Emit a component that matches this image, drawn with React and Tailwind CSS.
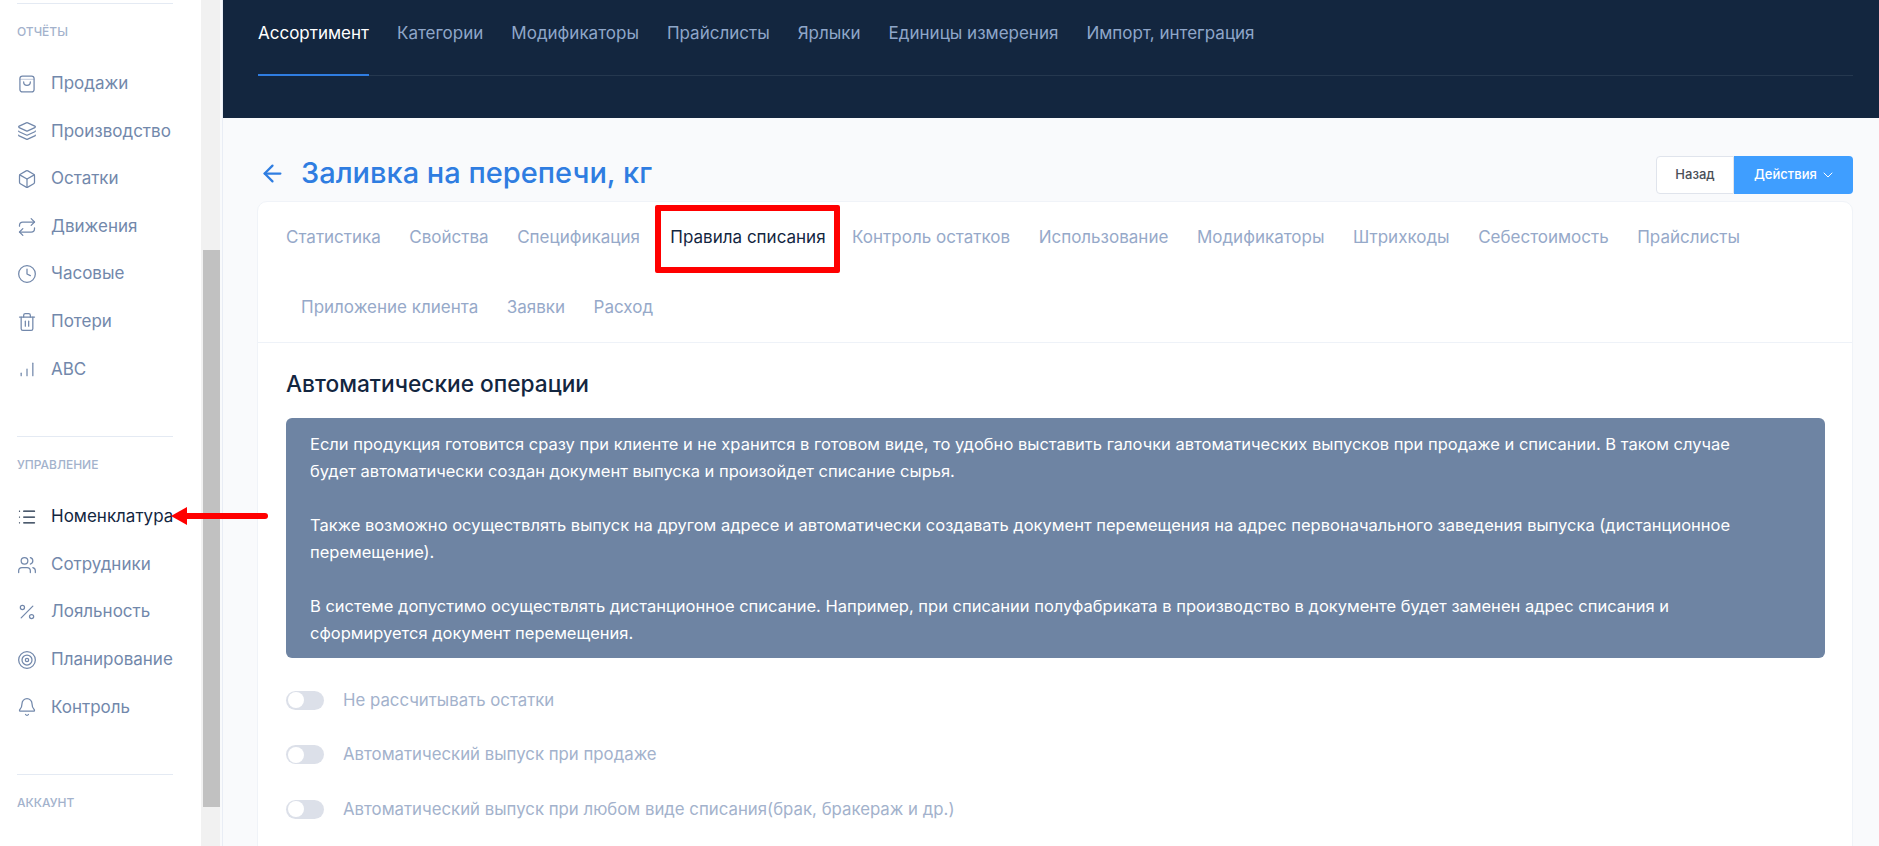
import React from "react";
import {
  Layers,
  Box,
  Repeat,
  Clock,
  Trash2,
  List,
  Users,
  Percent,
  Target,
  Bell,
  User,
  ArrowLeft,
  ChevronDown,
} from "lucide-react";

const BagIcon = (props) => (
  <svg viewBox="0 0 24 24" fill="none" stroke="currentColor" strokeLinecap="round" strokeLinejoin="round" {...props}>
    <rect x="3.5" y="2.5" width="17" height="19" rx="3" />
    <path d="M3.5 6.5h17" opacity="0.35" />
    <path d="M8 9.5a4 4 0 0 0 8 0" />
  </svg>
);

const SignalIcon = (props) => (
  <svg viewBox="0 0 24 24" fill="none" stroke="currentColor" strokeLinecap="round" {...props}>
    <path d="M5 20v-3" />
    <path d="M12 20v-8" />
    <path d="M19 20V5" />
  </svg>
);

const reports = [
  [BagIcon, "Продажи"],
  [Layers, "Производство"],
  [Box, "Остатки"],
  [Repeat, "Движения"],
  [Clock, "Часовые"],
  [Trash2, "Потери"],
  [SignalIcon, "ABC"],
];

const manage = [
  [List, "Номенклатура", true],
  [Users, "Сотрудники"],
  [Percent, "Лояльность"],
  [Target, "Планирование"],
  [Bell, "Контроль"],
];

const topTabs = ["Категории", "Модификаторы", "Прайслисты", "Ярлыки", "Единицы измерения", "Импорт, интеграция"];
const firstRow = ["Контроль остатков", "Использование", "Модификаторы", "Штрихкоды", "Себестоимость", "Прайслисты"];
const secondRow = ["Приложение клиента", "Заявки", "Расход"];
const toggles = [
  "Не рассчитывать остатки",
  "Автоматический выпуск при продаже",
  "Автоматический выпуск при любом виде списания(брак, бракераж и др.)",
];

const NavItem = ({ icon: Icon, label, active }) => (
  <div className={`flex h-[47.6px] items-center gap-[14px] text-[17px] ${active ? "text-[#13263f]" : "text-[#7288ab]"}`}>
    <Icon className="h-5 w-5 shrink-0" strokeWidth={1.5} />
    {label && <span className="whitespace-nowrap">{label}</span>}
  </div>
);

const Section = ({ title, children }) => (
  <div>
    <div className="border-t border-[#e4eaf3]" />
    <div className="mt-[20px] mb-[20px] h-4 text-[12px] leading-4 font-medium text-[#a3b2cc] uppercase">{title}</div>
    {children}
  </div>
);

const Sidebar = () => (
  <div className="w-[201px] shrink-0 bg-white pt-[3px] pl-[17px] pr-[28px]">
    <Section title="Отчёты">
      {reports.map(([icon, label]) => (
        <NavItem key={label} icon={icon} label={label} />
      ))}
    </Section>
    <div className="mt-[43px]">
      <Section title="Управление">
        {manage.map(([icon, label, active]) => (
          <NavItem key={label} icon={icon} label={label} active={active} />
        ))}
      </Section>
    </div>
    <div className="mt-[43px]">
      <Section title="Аккаунт">
        <NavItem icon={User} />
      </Section>
    </div>
  </div>
);

const Toggle = ({ label }) => (
  <div className="flex h-[54.5px] items-center gap-[19px]">
    <div className="flex h-[19px] w-[38px] items-center rounded-full bg-[#dce0e9] pl-[2px]">
      <div className="h-[16px] w-[16px] rounded-full bg-white" />
    </div>
    <span className="text-[16.8px] text-[#a3b2cc]">{label}</span>
  </div>
);

const App = () => (
  <div className="relative flex h-[846px] overflow-hidden bg-[#f9fafc] font-['Inter',sans-serif]">
    <Sidebar />
    <div className="w-[19px] shrink-0 bg-[#f1f1f1] pl-[2px]">
      <div className="mt-[250px] h-[557px] bg-[#c1c1c1]" />
    </div>
    <div className="w-[3px] shrink-0 border-r border-[#e9edf5] bg-[#f9fafc]" />

    <div className="min-w-0 flex-1">
      <div className="h-[118px] bg-[#13263f] pl-[35px] pr-[26px]">
        <div className="flex h-[76px] gap-[28px] border-b border-[#25384f] text-[17px]">
          <div className="h-[76px] border-b-2 border-[#2f7de1] pt-[21px] leading-[24px] text-white">Ассортимент</div>
          {topTabs.map((t) => (
            <div key={t} className="pt-[21px] leading-[24px] text-[#8fa6c9]">{t}</div>
          ))}
        </div>
      </div>

      <div className="pl-[34px] pr-[26px]">
        <div className="flex h-[83px] items-end justify-between pb-[7px]">
          <div className="mb-[1px] flex items-center gap-[15px] text-[#2f7de1]">
            <ArrowLeft className="ml-[2px] h-[27px] w-[27px]" strokeWidth={2} />
            <h1 className="text-[29px] leading-[40px] font-medium">Заливка на перепечи, кг</h1>
          </div>
          <div className="flex h-[38px] text-[13px] font-medium">
            <div className="flex w-[78px] items-center justify-center rounded-l-[4px] border border-[#e0e4ec] bg-white text-[#4a4f57]">Назад</div>
            <div className="flex w-[119px] items-center gap-[3px] rounded-r-[4px] bg-[#3f9eff] pl-[20px] text-white">
              Действия
              <ChevronDown className="h-4 w-4" strokeWidth={1.5} />
            </div>
          </div>
        </div>

        <div className="h-[700px] rounded-t-[10px] border border-[#f0f3f8] bg-white">
          <div className="border-b border-[#eef2f8] pt-[21px] pb-[19px]">
            <div className="flex h-[30px] items-center gap-[28.5px] pl-[28px] text-[17px] text-[#96a9c9]">
              <span>Статистика</span>
              <span>Свойства</span>
              <span>Спецификация</span>
              <span className="relative mr-[-2px] ml-[2px] text-[#13263f]">
                Правила списания
                <span className="absolute -top-[20px] -right-[14px] -bottom-[22px] -left-[15px] rounded-[2px] border-[6px] border-[#ff0000]" />
              </span>
              {firstRow.map((t) => (
                <span key={t}>{t}</span>
              ))}
            </div>
            <div className="mt-[40px] flex h-[30px] items-center gap-[28.5px] pl-[43px] text-[17px] text-[#96a9c9]">
              {secondRow.map((t) => (
                <span key={t}>{t}</span>
              ))}
            </div>
          </div>

          <div className="pl-[28px] pr-[27px]">
            <h2 className="mt-[25px] text-[22.7px] leading-[32px] font-medium text-[#13263f]">Автоматические операции</h2>
            <div className="mt-[18px] rounded-[6px] bg-[#6e84a3] pt-[13px] pr-[50px] pb-[11px] pl-6 text-[16.5px] leading-[27px] text-white">
              Если продукция готовится сразу при клиенте и не хранится в готовом виде, то удобно выставить галочки автоматических выпусков при продаже и списании. В таком случае будет автоматически создан документ выпуска и произойдет списание сырья.
              <br />
              <br />
              Также возможно осуществлять выпуск на другом адресе и автоматически создавать документ перемещения на адрес первоначального заведения выпуска (дистанционное перемещение).
              <br />
              <br />
              В системе допустимо осуществлять дистанционное списание. Например, при списании полуфабриката в производство в документе будет заменен адрес списания и сформируется документ перемещения.
            </div>
            <div className="mt-[15px]">
              {toggles.map((t) => (
                <Toggle key={t} label={t} />
              ))}
            </div>
          </div>
        </div>
      </div>
    </div>

    <div className="absolute top-[507px] left-[171px] flex items-center">
      <div className="h-0 w-0 border-y-[9px] border-r-[16px] border-y-transparent border-r-[#ff0000]" />
      <div className="h-[6px] w-[81px] rounded-r-full bg-[#ff0000]" />
    </div>
  </div>
);

export default App;
